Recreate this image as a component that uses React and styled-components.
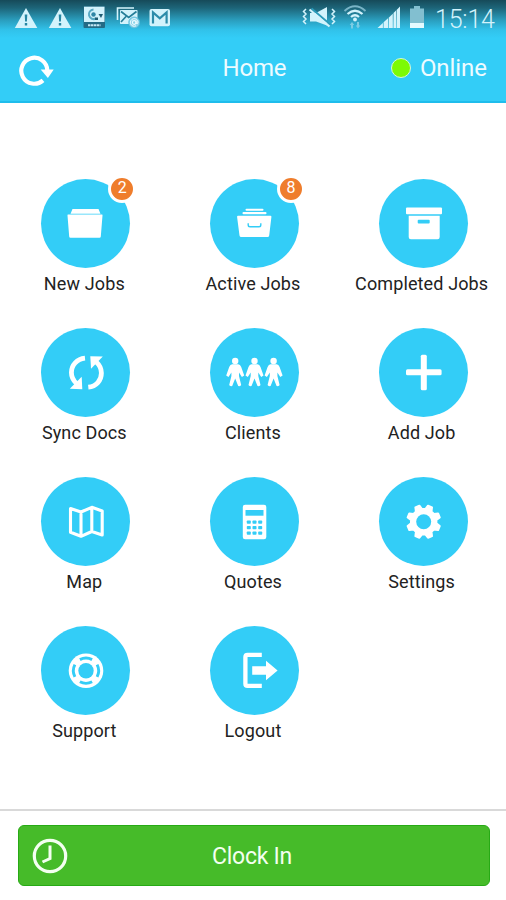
import React from 'react';
import styled, { createGlobalStyle } from 'styled-components';

const BLUE = '#33cdf7';
const PALE = '#d3f3fc';

const GlobalStyle = createGlobalStyle`
  * {
    box-sizing: border-box;
  }

  body {
    margin: 0;
    background: #fff;
    font-family: Roboto, 'Liberation Sans', sans-serif;
  }
`;

const Screen = styled.div`
  display: flex;
  flex-direction: column;
  width: 506px;
  height: 900px;
  overflow: hidden;
  background: #fff;
`;

const Header = styled.header`
  height: 103px;
  background: linear-gradient(#164a59 0, #1d6579 8px, #2a9dbd 20px, #31c2ea 30px, ${BLUE} 38px);
  border-bottom: 2px solid #1fbdec;
`;

const StatusBar = styled.div`
  display: flex;
  align-items: flex-start;
  height: 36px;
  padding: 5px 10px 0 14px;
`;

const StatusIcon = styled.svg`
  flex: none;
  width: ${props => props.width}px;
  height: 24px;
  margin-right: ${props => props.$gap}px;
  fill: ${PALE};
`;

const Spacer = styled.div`
  flex: 1;
`;

const Time = styled.span`
  width: 61px;
  color: ${PALE};
  font-size: 25px;
  font-weight: 300;
  line-height: 29px;
  white-space: nowrap;
  letter-spacing: -0.2px;
`;

const TitleBar = styled.div`
  display: grid;
  grid-template-columns: 1fr auto 1fr;
  align-items: center;
  height: 64px;
  padding: 0 19px;
`;

const RefreshButton = styled.button`
  width: 38px;
  height: 34px;
  margin-top: 4px;
  padding: 0;
  border: none;
  background: none;
`;

const Title = styled.h1`
  margin: 0 0 0 3px;
  color: #eefbff;
  font-size: 24px;
  font-weight: 400;
  line-height: 28px;
  letter-spacing: -0.2px;
`;

const Connection = styled.div`
  display: flex;
  align-items: center;
  justify-content: flex-end;
  gap: 9px;
  color: #eefbff;
  font-size: 24px;
  line-height: 28px;
  letter-spacing: -0.05px;
`;

const Dot = styled.span`
  width: 20px;
  height: 20px;
  border: 1.5px solid #d6f7d9;
  border-radius: 50%;
  background: #7dfa05;
`;

const Menu = styled.main`
  display: grid;
  grid-template-columns: repeat(3, 1fr);
  grid-auto-rows: 149px;
  flex: 1;
  padding-top: 76px;
`;

const Tile = styled.div`
  display: flex;
  flex-direction: column;
  align-items: center;
`;

const Circle = styled.div`
  position: relative;
  width: 89px;
  height: 89px;
  margin-left: 3px;
  border-radius: 50%;
  background: ${BLUE};
`;

const Glyph = styled.svg`
  display: block;
  width: 89px;
  height: 89px;
  fill: #fff;
`;

const Badge = styled.span`
  position: absolute;
  top: -4px;
  right: -6px;
  width: 28px;
  height: 28px;
  border: 3px solid #fff;
  border-radius: 50%;
  background: #ef7d2c;
  color: #fff;
  font-size: 16px;
  line-height: 20px;
  text-align: center;
`;

const Label = styled.span`
  margin-top: 5px;
  color: #222;
  font-size: 18px;
  line-height: 21px;
  letter-spacing: 0.12px;
  white-space: nowrap;
`;

const Footer = styled.footer`
  height: 91px;
  padding: 14px 16px 0 18px;
  border-top: 2px solid #d9d9d9;
`;

const ClockInButton = styled.button`
  display: grid;
  grid-template-columns: 36px 1fr 36px;
  align-items: center;
  width: 100%;
  height: 61px;
  padding: 0 17px 0 13px;
  border: 1px solid #27aa15;
  border-radius: 6px;
  background: #46bb29;
  color: #f3fff0;
  font-family: inherit;
  font-size: 23px;
  letter-spacing: -0.25px;
`;

const ButtonText = styled.span`
  padding-top: 2px;
`;

const gearPoints = Array.from({ length: 8 }, (_, i) => {
  const center = 22.5 + i * 45;
  return [[-15, 12.8], [-7.5, 16.6], [7.5, 16.6], [15, 12.8]].map(([offset, r]) => {
    const a = ((center + offset) * Math.PI) / 180;
    return `${(44.7 + r * Math.cos(a)).toFixed(2)},${(44.7 + r * Math.sin(a)).toFixed(2)}`;
  }).join(' ');
}).join(' ');

const Person = ({ x }) => (
  <g transform={`translate(${x} 0)`}>
    <circle cx="0" cy="33" r="3.2" />
    <path d="M-3 36.2H3Q5 36.5 6 39L9 47.5L6.7 49L3.8 44.5V48L6 57Q5.5 58.5 3 58L0 50.5L-3 58Q-5.5 58.5 -6 57L-3.8 48V44.5L-6.7 49L-9 47.5L-6 39Q-5 36.5 -3 36.2Z" />
  </g>
);

const glyphs = {
  folder: (
    <>
      <path d="M31.5 30H57.5L59.5 34.7H29.5Z" />
      <path d="M27 35.5H61Q61.7 35.5 61.5 36.5L59.8 57.5Q59.7 58.7 58.5 58.7H29.5Q28.3 58.7 28.2 57.5L26.5 36.5Q26.4 35.5 27 35.5Z" />
    </>
  ),
  tray: (
    <>
      <rect x="35.5" y="29.8" width="18" height="2" rx="1" />
      <rect x="32.5" y="33" width="24" height="2.3" rx="1" />
      <path d="M28 36.8H60.5Q61.6 36.8 61.4 38L59.2 56.5Q59 58 57.5 58H31.2Q29.7 58 29.5 56.5L27.1 38Q27 36.8 28 36.8Z" />
      <path d="M38.2 44.3V46Q38.2 47.8 40 47.8H49Q50.8 47.8 50.8 46V44.3" fill="none" stroke={BLUE} strokeWidth="1.4" />
    </>
  ),
  box: (
    <>
      <rect x="27" y="28.5" width="36" height="6.8" rx="1" />
      <path d="M29.7 36.8H60.7V58Q60.7 60.2 58.5 60.2H31.9Q29.7 60.2 29.7 58Z" />
      <rect x="38.7" y="40.7" width="12" height="3.8" rx="1" fill={BLUE} />
    </>
  ),
  sync: (
    <>
      <path d="M44 30.2C36 31 30.4 37 30.4 44.5Q30.4 50.8 35.5 55.5" fill="none" stroke="#fff" strokeWidth="4.8" />
      <path d="M40.7 48.8L41.3 61.2L28.8 60.8Z" />
      <path d="M47.3 59.2C55.3 58.4 60.4 52.4 60.4 44.9Q60.4 38.6 55.3 33.9" fill="none" stroke="#fff" strokeWidth="4.8" />
      <path d="M50 40.7L49.3 28.2L61.8 28.5Z" />
    </>
  ),
  people: (
    <>
      <Person x={25.2} />
      <Person x={44.5} />
      <Person x={63.6} />
    </>
  ),
  plus: (
    <>
      <rect x="27" y="41.3" width="35.6" height="6" rx="1.5" />
      <rect x="41.8" y="26.7" width="6" height="35.6" rx="1.5" />
    </>
  ),
  map: (
    <path
      d="M29.5 31.5L40 35L50.8 30.3L61.2 34V58L50.8 54.5L40 59.3L29.5 55.3ZM40 35V59M50.8 30.3V54.5"
      fill="none"
      stroke="#fff"
      strokeWidth="3.1"
      strokeLinejoin="round"
    />
  ),
  calculator: (
    <>
      <rect x="32.8" y="27.7" width="23.5" height="34.6" rx="2.3" />
      <rect x="35.5" y="33" width="18" height="5.7" fill={BLUE} />
      {[43.4, 48.9, 54.5].map(y => [36.8, 42.5, 48.2].map(x => (
        <rect key={`${x}-${y}`} x={x} y={y} width="4" height="3.3" rx="0.8" fill={BLUE} />
      )))}
    </>
  ),
  gear: (
    <>
      <polygon points={gearPoints} stroke="#fff" strokeWidth="2" strokeLinejoin="round" />
      <circle cx="44.7" cy="44.7" r="7.5" fill={BLUE} />
    </>
  ),
  lifebuoy: (
    <>
      <circle cx="45" cy="44.7" r="17.3" />
      <circle cx="45" cy="44.7" r="7.7" fill={BLUE} />
      {[0, 90, 180, 270].map(angle => (
        <path
          key={angle}
          d="M38.9 33.6Q45 30.4 51.1 33.6"
          fill="none"
          stroke={BLUE}
          strokeWidth="2.9"
          transform={`rotate(${angle} 45 44.7)`}
        />
      ))}
    </>
  ),
  logout: (
    <>
      <path d="M51.8 28.8H37.5Q35.4 28.8 35.4 31V57.7Q35.4 59.9 37.5 59.9H51.8" fill="none" stroke="#fff" strokeWidth="4.3" />
      <path d="M42.2 40.3H56V34.8L67.6 44.5L56 54.2V48.7H42.2Z" />
    </>
  ),
};

const items = [
  { label: 'New Jobs', glyph: 'folder', count: 2 },
  { label: 'Active Jobs', glyph: 'tray', count: 8 },
  { label: 'Completed Jobs', glyph: 'box' },
  { label: 'Sync Docs', glyph: 'sync' },
  { label: 'Clients', glyph: 'people' },
  { label: 'Add Job', glyph: 'plus' },
  { label: 'Map', glyph: 'map' },
  { label: 'Quotes', glyph: 'calculator' },
  { label: 'Settings', glyph: 'gear' },
  { label: 'Support', glyph: 'lifebuoy' },
  { label: 'Logout', glyph: 'logout' },
];

const WarningIcon = ({ gap }) => (
  <StatusIcon width={24} $gap={gap} viewBox="0 0 24 24">
    <path d="M12 3L23.3 23H0.8Z" />
    <path d="M10.7 9.5H13.3L12.9 16.5H11.1ZM10.8 18H13.2V20.5H10.8Z" fill="#2586a3" />
  </StatusIcon>
);

const Status = () => (
  <StatusBar>
    <WarningIcon gap={10} />
    <WarningIcon gap={11} />
    <StatusIcon width={23} $gap={10} viewBox="0 0 23 24">
      <rect x="0.5" y="1" width="21.5" height="22" rx="1" fill="#246b85" />
      <rect x="1" y="1.7" width="20.5" height="15.3" />
      <path d="M10.5 4.5A4.8 4.8 0 1 0 13 13.5" fill="none" stroke="#58a9c4" strokeWidth="2" />
      <circle cx="10.5" cy="9.5" r="2.2" fill="#2f86a6" />
      <path d="M12 12.5H15V15H12ZM15.5 9H20L18 13Z" fill="#205d73" />
      <path d="M5 20.3H17.5" stroke="#c3e8f4" strokeWidth="2" strokeDasharray="2.5 0.5" />
    </StatusIcon>
    <StatusIcon width={24} $gap={9} viewBox="0 0 24 24">
      <path d="M1.5 15V3H18" fill="none" stroke={PALE} strokeWidth="1.6" />
      <rect x="4" y="5" width="17.5" height="14" rx="0.8" />
      <path d="M5 6.5L12.7 12.5L20.5 6.5M5 17L10 11.5" fill="none" stroke="#247d98" strokeWidth="1.7" />
      <circle cx="18.2" cy="17.5" r="5.5" fill="#8bd2e8" stroke="#55bad9" strokeWidth="0.8" />
      <circle cx="18.2" cy="17.5" r="1.8" fill="none" stroke="#eefbff" strokeWidth="1.2" />
      <path d="M20.2 15.5V18.5Q22 19.5 22 17A3.8 3.8 0 1 0 20 20.8" fill="none" stroke="#eefbff" strokeWidth="1" />
    </StatusIcon>
    <StatusIcon width={22} $gap={0} viewBox="0 0 22 24">
      <rect x="0.5" y="4" width="20.5" height="17.3" rx="2" />
      <path d="M4 18.5V7.5L10.8 13.3L17.6 7.5V18.5" fill="none" stroke="#2c8caa" strokeWidth="2.2" />
    </StatusIcon>
    <Spacer />
    <StatusIcon width={34} $gap={7} viewBox="0 0 34 24">
      <path d="M8 8H14L25 2V20.5L14 16.5H8Z" />
      <path d="M9.5 3.5L28.5 19.8" stroke="#2b9ab9" strokeWidth="2" />
      <path d="M7.5 4.5L27.5 21.5" stroke={PALE} strokeWidth="2.2" />
      <path d="M4 4L1.5 6.5L4 9L1.5 11.5L4 14L1.5 16.5L4 19M30 4L32.5 6.5L30 9L32.5 11.5L30 14L32.5 16.5L30 19" fill="none" stroke={PALE} strokeWidth="1.5" />
    </StatusIcon>
    <StatusIcon width={24} $gap={10} viewBox="0 0 24 24">
      <path d="M1.5 6Q12 -3.5 22.5 6" fill="none" stroke="#79b4c6" strokeWidth="1.9" />
      <path d="M4.5 9Q12 2.5 19.5 9M8 12Q12 8.5 16 12" fill="none" stroke={PALE} strokeWidth="2.2" />
      <circle cx="12" cy="14.5" r="1.9" />
      <path d="M9 17L11.3 20H10V23.5H8V20H6.7ZM15 23.5L17.3 20.5H16V17H14V20.5H12.7Z" fill="#7bcce3" />
    </StatusIcon>
    <StatusIcon width={24} $gap={8} viewBox="0 0 24 24">
      <path d="M0.5 23L5.9 18V23ZM6.6 17.2L11 13.3V23H6.6ZM11.7 12.7L15.8 8.7V23H11.7ZM16.5 8L19 5.5V23H16.5ZM19.6 4.9L23 1.5V23H19.6Z" />
    </StatusIcon>
    <StatusIcon width={16} $gap={10} viewBox="0 0 16 24">
      <path d="M5 1H11V3.5H15V23H1V3.5H5Z" fill="#82bfd0" />
      <rect x="1" y="18" width="14" height="5" fill="#e5faff" />
    </StatusIcon>
    <Time>15:14</Time>
  </StatusBar>
);

const MenuTile = ({ item }) => (
  <Tile>
    <Circle>
      <Glyph viewBox="0 0 89 89">{glyphs[item.glyph]}</Glyph>
      {item.count ? <Badge>{item.count}</Badge> : null}
    </Circle>
    <Label>{item.label}</Label>
  </Tile>
);

const App = () => (
  <Screen>
    <GlobalStyle />
    <Header>
      <Status />
      <TitleBar>
        <RefreshButton aria-label="Refresh">
          <svg width="38" height="34" viewBox="0 0 38 34">
            <path d="M24 27.4A13 13 0 1 1 28.3 17.5" fill="none" stroke="#fff" strokeWidth="4.2" />
            <path d="M21.7 16.5H34.7L28.9 25Z" fill="#fff" />
          </svg>
        </RefreshButton>
        <Title>Home</Title>
        <Connection>
          <Dot />
          Online
        </Connection>
      </TitleBar>
    </Header>
    <Menu>
      {items.map(item => <MenuTile key={item.label} item={item} />)}
    </Menu>
    <Footer>
      <ClockInButton>
        <svg width="36" height="36" viewBox="0 0 36 36">
          <circle cx="18" cy="18" r="15.7" fill="none" stroke="#f3fff0" strokeWidth="3.2" />
          <path d="M18 7.5V20.5L10.5 24" fill="none" stroke="#f3fff0" strokeWidth="3" />
        </svg>
        <ButtonText>Clock In</ButtonText>
      </ClockInButton>
    </Footer>
  </Screen>
);

export default App;
